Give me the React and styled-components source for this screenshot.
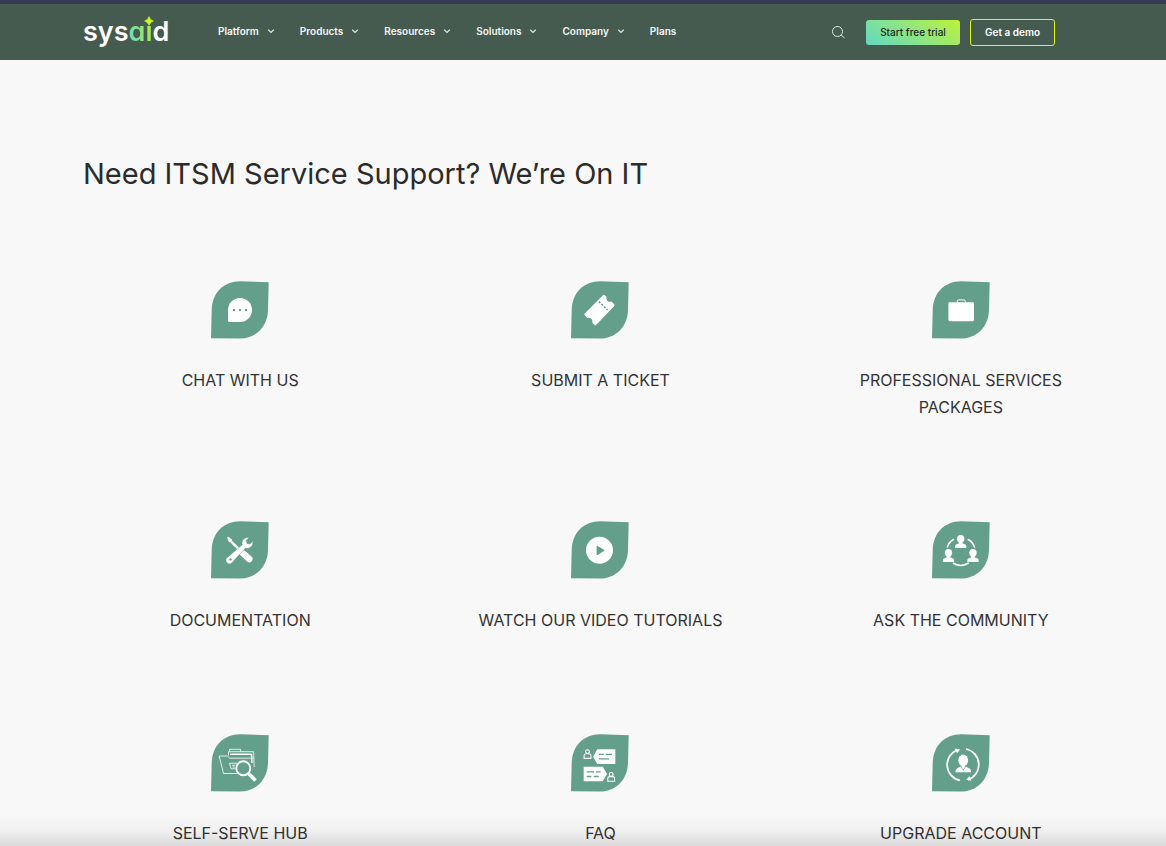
import React from 'react';
import styled, { createGlobalStyle } from 'styled-components';

const GlobalStyle = createGlobalStyle`
  * {
    box-sizing: border-box;
  }
  body {
    margin: 0;
    background: #f8f8f8;
    color: #2b2b2b;
    font-family: Inter, 'Liberation Sans', sans-serif;
  }
`

const Header = styled.header`
  display: flex;
  align-items: center;
  height: 60px;
  padding: 0 111px 0 83px;
  border-top: 4px solid #353c51;
  background: #455b50;
`
const Logo = styled.a`
  position: relative;
  width: 85px;
  margin-right: 50px;
  color: #ffffff;
  font-size: 27px;
  line-height: 34px;
  font-weight: 600;
  font-feature-settings: 'cv11';
  text-decoration: none;
`
const LogoAi = styled.span`
  background: linear-gradient(80deg, #62dcc8 0%, #8fe873 55%, #b9f03a 100%);
  background-clip: text;
  color: transparent;
`
const Star = styled.svg`
  position: absolute;
  top: 1px;
  left: 61px;
`
const Nav = styled.nav`
  display: flex;
  align-items: center;
  gap: 25px;
  padding-bottom: 2px;
`
const NavButton = styled.button`
  display: flex;
  align-items: center;
  gap: 8px;
  padding: 0;
  border: 0;
  background: none;
  color: #f3f6f4;
  font: 600 10px/16px Inter, 'Liberation Sans', sans-serif;
  cursor: pointer;
`
const NavLink = styled.a`
  color: #f3f6f4;
  font-size: 10px;
  line-height: 16px;
  font-weight: 600;
  text-decoration: none;
`
const Actions = styled.div`
  display: flex;
  align-items: center;
  margin-left: auto;
  gap: 10px;
`
const SearchButton = styled.button`
  display: flex;
  margin-right: 11px;
  padding: 0;
  border: 0;
  background: none;
  cursor: pointer;
`
const Trial = styled.a`
  width: 94px;
  border-radius: 3px;
  background: linear-gradient(35deg, #62d8c3 0%, #8fe584 50%, #bdf235 100%);
  color: #1d2b20;
  font-size: 10px;
  line-height: 25px;
  font-weight: 500;
  text-align: center;
  text-decoration: none;
`
const Demo = styled.a`
  width: 85px;
  border: 1px solid #d9f516;
  border-radius: 3px;
  color: #ffffff;
  font-size: 10px;
  line-height: 25px;
  font-weight: 600;
  text-align: center;
  text-decoration: none;
`
const Main = styled.main`
  padding-top: 92px;
`
const Title = styled.h1`
  margin: 0 83px 85px;
  font-size: 29px;
  line-height: 44px;
  font-weight: 400;
`
const Grid = styled.div`
  display: grid;
  grid-template-columns: repeat(3, 1fr);
  row-gap: 100px;
  padding: 0 25px 0 60px;
`
const Card = styled.a`
  display: flex;
  flex-direction: column;
  align-items: center;
  gap: 28px;
  color: #333333;
  text-decoration: none;
`
const Label = styled.span`
  max-width: 250px;
  font-size: 16px;
  line-height: 27px;
  font-weight: 400;
  text-align: center;
`
const Shade = styled.div`
  position: fixed;
  left: 0;
  right: 0;
  bottom: 0;
  height: 30px;
  background: linear-gradient(rgba(0, 0, 0, 0), rgba(0, 0, 0, 0.03) 50%, rgba(0, 0, 0, 0.12));
  pointer-events: none;
`

const Chevron = () => (
  <svg width="8" height="8" viewBox="0 0 8 8" fill="none" stroke="#d5ece2" strokeWidth="1.2">
    <path d="M1.2 2.8 L4 5.5 L6.8 2.8" />
  </svg>
)

const Leaf = ({ children }) => (
  <svg width="58" height="58" viewBox="0 0 58 58" fill="none">
    <path d="M0 57.2 L.7 29 C1.2 11 13 .6 29 .3 L57.7 1.3 L57 29 C56.4 46 45 57.2 29 57.6 Z" fill="#649f8c" />
    {children}
  </svg>
)

const ChatIcon = () => (
  <Leaf>
    <path d="M17 29 a12 12 0 1 1 12 12 H18.5 a1.5 1.5 0 0 1 -1.5 -1.5 Z" fill="#fff" />
    <path d="M22 28h2v2h-2z M28 28h2v2h-2z M34 28h2v2h-2z" fill="#649f8c" />
  </Leaf>
)

const TicketIcon = () => (
  <Leaf>
    <path
      d="M32 14.2 q.9 -.9 1.8 0 l1.7 1.7 q-.7 2.6 1 4 q1.6 1.4 4 .6 l2.7 2.7 q.8 .8 0 1.7 L25.2 44 q-.9 .8 -1.7 0 l-2.2 -2.3 q.6 -2.4 -1 -4 q-1.7 -1.5 -4 -.8 l-2.6 -2.6 q-.9 -.9 0 -1.8 Z"
      fill="#fff"
    />
    <path d="M27.8 20.5 L36.6 29" stroke="#649f8c" strokeWidth="1.5" strokeDasharray="2 1.6" />
  </Leaf>
)

const BriefcaseIcon = () => (
  <Leaf>
    <rect x="16.4" y="21.2" width="25.6" height="19" rx="1.4" fill="#fff" />
    <path d="M25.3 21.5 v-1.2 q0 -1.4 1.4 -1.4 h5.2 q1.4 0 1.4 1.4 v1.2" stroke="#fff" strokeWidth="1" />
  </Leaf>
)

const ToolsIcon = () => (
  <Leaf>
    <path d="M16 16.6 l2 -.6 l2.6 2.2 l.4 1.6 l10.2 10 l-1.8 1.8 l-10 -10.2 l-1.6 -.6 Z" fill="#fff" />
    <path d="M32.3 32.6 L38.3 38" stroke="#fff" strokeWidth="6.4" strokeLinecap="round" />
    <path
      d="M17.3 35.7 L31.2 23.8 C30.2 19.5 33.5 15.8 38 16.6 L35.2 19.6 L36 22.4 L38.9 23.1 L41.8 20.2 C42.6 24.8 38.8 28.2 34.5 27.1 L22 40.6 A3.7 3.7 0 1 1 17.3 35.7 Z"
      fill="#fff"
      stroke="#649f8c"
      strokeWidth=".5"
    />
    <circle cx="19.5" cy="38.4" r="1.2" fill="#649f8c" />
  </Leaf>
)

const PlayIcon = () => (
  <Leaf>
    <circle cx="28.5" cy="29.3" r="13.5" fill="#fff" />
    <path d="M26.3 25.5 L32.6 29.3 L26.3 33.3 Z" fill="#649f8c" stroke="#649f8c" strokeWidth="1.4" strokeLinejoin="round" />
  </Leaf>
)

// head and shoulders, 11 units wide, centred on x
const Person = ({ x, y }) => (
  <path
    transform={`translate(${x} ${y})`}
    d="M0 -4 C2.4 -4 3.7 -2.4 3.7 -.2 C3.7 1.4 3 2.7 1.9 3.5 L1.9 4.6 C4.2 5.2 5.6 5.6 5.6 7.2 V9 H-5.6 V7.2 C-5.6 5.6 -4.2 5.2 -1.9 4.6 L-1.9 3.5 C-3 2.7 -3.7 1.4 -3.7 -.2 C-3.7 -2.4 -2.4 -4 0 -4 Z"
    fill="#fff"
  />
)

const CommunityIcon = () => (
  <Leaf>
    <Person x="28.7" y="18" />
    <Person x="16.5" y="32" />
    <Person x="41" y="32" />
    <g stroke="#fff" strokeWidth="1.6" strokeLinecap="round">
      <path d="M15.4 26 Q17 21 21.4 18.5" />
      <path d="M36.2 18.5 Q41 21.3 42.5 26" />
      <path d="M21.4 42.3 Q28.7 46.6 36.2 42.3" />
    </g>
  </Leaf>
)

const HubIcon = () => (
  <Leaf>
    <g stroke="#fff" strokeWidth=".8" strokeLinejoin="round">
      <path d="M12.5 39.5 L8.2 22 H16.3 L18.5 24.2 H43" />
      <path d="M12.5 39.5 H26" />
      <path d="M17.5 21.5 V17.7 H18.5 V15.3 H29.6 V17.7 H42.6 L43.2 33" />
      <path d="M18.5 17.7 H29.6" />
      <path d="M19 20.2 H40.5 L41 29" strokeWidth="1.4" />
      <path d="M18.5 29.2 H26 M18.5 29.2 L20 34.7 H24.5 M21 31.2 H24.5 M21.5 33 H24" />
    </g>
    <path d="M37 39 L44.5 46.5" stroke="#fff" strokeWidth="3.4" />
    <circle cx="32.3" cy="34.3" r="7" fill="#649f8c" stroke="#fff" strokeWidth="1.9" />
  </Leaf>
)

const FaqPerson = ({ x, y }) => (
  <g transform={`translate(${x} ${y})`} stroke="#fff" strokeWidth="1.1">
    <circle cx="0" cy="-2.6" r="1.9" />
    <path d="M-3.4 4.2 V1.6 Q-3.4 -.4 -1.4 -.4 H1.4 Q3.4 -.4 3.4 1.6 V4.2 Z" />
  </g>
)

const FaqIcon = () => (
  <Leaf>
    <path d="M22.2 22.7 L26.2 15.2 H44.3 V30 H26.2 Z" fill="#fff" />
    <path d="M28 20.4 h4.8 M34.7 20.4 h6.3 M28 24.8 h10" stroke="#649f8c" strokeWidth="1.3" />
    <path d="M12.7 32.7 H31.8 L36 40 L31.8 47.2 H12.7 Z" fill="#fff" />
    <path d="M15.8 37.8 h7.2 M25 37.8 h4.6 M15.8 42.5 h4.6 M22.7 42.5 h5" stroke="#649f8c" strokeWidth="1.3" />
    <FaqPerson x="16.5" y="20.2" />
    <FaqPerson x="40.2" y="43" />
  </Leaf>
)

const AccountIcon = () => (
  <Leaf>
    <g stroke="#fff" strokeWidth="1.7">
      <path d="M27.8 46.4 A16 16 0 0 1 25 16" />
      <path d="M34 15 A16 16 0 0 1 36 45.8" />
    </g>
    <path d="M22.8 14.5 L28 15.4 L25 19.2 Z M39.3 46.8 L34 45.8 L37.6 42.2 Z" fill="#fff" />
    <ellipse cx="31.2" cy="26.4" rx="4.9" ry="5.8" fill="#fff" />
    <path d="M23.4 38.2 C23.6 34.5 26.2 34 28.5 32.6 L31.2 36.4 L33.9 32.6 C36.4 34 39 34.5 39.2 38.2 Z" fill="#fff" />
    <path d="M29.4 30 h3.6 v3 l-1.8 2.6 l-1.8 -2.6 Z" fill="#fff" />
  </Leaf>
)

const menus = ['Platform', 'Products', 'Resources', 'Solutions', 'Company']

const cards = [
  { label: 'CHAT WITH US', Icon: ChatIcon },
  { label: 'SUBMIT A TICKET', Icon: TicketIcon },
  { label: 'PROFESSIONAL SERVICES PACKAGES', Icon: BriefcaseIcon },
  { label: 'DOCUMENTATION', Icon: ToolsIcon },
  { label: 'WATCH OUR VIDEO TUTORIALS', Icon: PlayIcon },
  { label: 'ASK THE COMMUNITY', Icon: CommunityIcon },
  { label: 'SELF-SERVE HUB', Icon: HubIcon },
  { label: 'FAQ', Icon: FaqIcon },
  { label: 'UPGRADE ACCOUNT', Icon: AccountIcon },
]

const App = () => {
  return (
    <>
      <GlobalStyle />
      <Header>
        <Logo href="#">
          sys<LogoAi>ai</LogoAi>d
          <Star width="10" height="10" viewBox="0 0 8 8">
            <path d="M4 0 L5.4 2.6 L8 4 L5.4 5.4 L4 8 L2.6 5.4 L0 4 L2.6 2.6 Z" fill="#c8f51e" />
          </Star>
        </Logo>
        <Nav>
          {menus.map((name) => (
            <NavButton key={name} type="button">
              {name}
              <Chevron />
            </NavButton>
          ))}
          <NavLink href="#">Plans</NavLink>
        </Nav>
        <Actions>
          <SearchButton type="button" aria-label="Search">
            <svg width="13" height="13" viewBox="0 0 13 13" fill="none" stroke="#dfe8e3">
              <circle cx="5.5" cy="5.5" r="5" />
              <path d="M9.2 9.2 L12.6 12" />
            </svg>
          </SearchButton>
          <Trial href="#">Start free trial</Trial>
          <Demo href="#">Get a demo</Demo>
        </Actions>
      </Header>
      <Main>
        <Title>Need ITSM Service Support? We’re On IT</Title>
        <Grid>
          {cards.map(({ label, Icon }) => (
            <Card key={label} href="#">
              <Icon />
              <Label>{label}</Label>
            </Card>
          ))}
        </Grid>
      </Main>
      <Shade />
    </>
  )
}

export default App
